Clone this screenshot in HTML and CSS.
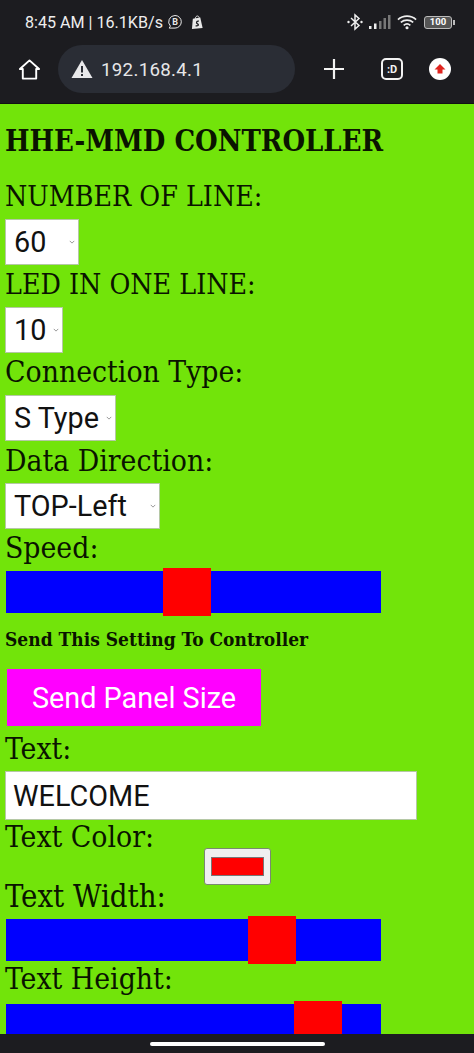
FILE: index.html
```html
<!DOCTYPE html>
<html lang="en">
<head>
<meta charset="utf-8">
<title>HHE-MMD CONTROLLER</title>
<link rel="stylesheet" href="styles.css">
</head>
<body>
<header class="chrome">
  <div class="status">
    <div class="status-left">
      <span>8:45 AM | 16.1KB/s</span>
      <svg class="ic-b" viewBox="0 0 16 16"><path d="M8 1.500a6.300 6.300 0 0 1 0 12.600H2.200l1.200-2A6.300 6.300 0 0 1 8 1.500z" fill="none" stroke="#e8e8e8" stroke-width="1"/><text x="8" y="11" text-anchor="middle" class="ic-b-t">B</text></svg>
      <svg class="ic-shop" viewBox="0 0 14 16"><path d="M2 4l8-1.500L12.500 14 1 15z" fill="#e8e8e8"/><path d="M4.500 4.500C4.500 2 6 1 7 1s2 1 2 3" fill="none" stroke="#e8e8e8"/><path d="M8.500 6.500C6 6 5 8.500 7 9.500s.5 2.500-2 2" fill="none" stroke="#1c1c20" stroke-width="1.400"/></svg>
    </div>
    <div class="status-right">
      <svg class="ic-bt" viewBox="0 0 18 18"><path d="M5 5l8 7.500L9 16V2l4 3.500L5 13" fill="none" stroke="#eee" stroke-width="1.500"/><circle cx="2.500" cy="9" r="1.200" fill="#eee"/><circle cx="15.500" cy="9" r="1.200" fill="#eee"/></svg>
      <svg class="ic-sig" viewBox="0 0 22 14"><rect x="0" y="11" width="2.500" height="3" fill="#eee"/><rect x="5" y="8.500" width="2.500" height="5.500" fill="#eee"/><rect x="10" y="6" width="2.500" height="8" fill="#777"/><rect x="14.500" y="3" width="2.500" height="11" fill="#777"/><rect x="19" y="0" width="2.500" height="14" fill="#777"/></svg>
      <svg class="ic-wifi" viewBox="0 0 22 16"><path d="M1 5.500a14 14 0 0 1 19 0M4 8.500a10 10 0 0 1 13 0M7 11.500a5.500 5.500 0 0 1 7 0" fill="none" stroke="#eee" stroke-width="1.700"/><circle cx="10.500" cy="14" r="1.600" fill="#eee"/></svg>
      <div class="battery"><span class="battery-body">100</span><span class="battery-tip"></span></div>
    </div>
  </div>
  <div class="toolbar">
    <svg class="ic-home" viewBox="0 0 24 24"><path d="M12 2.500L2 11.500h3V21.500h14V11.500h3z" fill="none" stroke="#fff" stroke-width="2" stroke-linejoin="round"/></svg>
    <div class="omnibox">
      <svg class="ic-warn" viewBox="0 0 22 20"><path d="M11 1L21.500 19H.5z" fill="#e8e8ea"/><rect x="10" y="7" width="2" height="6.500" fill="#2a2d35"/><rect x="10" y="15" width="2" height="2" fill="#2a2d35"/></svg>
      <span>192.168.4.1</span>
    </div>
    <svg class="ic-plus" viewBox="0 0 20 20"><path d="M10 0V20M0 10H20" stroke="#f2f2f2" stroke-width="2.200"/></svg>
    <div class="ext">:D</div>
    <div class="avatar"><svg viewBox="0 0 12 12"><path d="M6 1L11.500 6.500H8.500V10.500H3.500V6.500H.5z" fill="#e0241f"/></svg></div>
  </div>
</header>
<main class="page">
  <h1>HHE-MMD CONTROLLER</h1>
  <label class="lbl caps">NUMBER OF LINE:</label>
  <select class="sel w74"><option>60</option></select>
  <label class="lbl caps">LED IN ONE LINE:</label>
  <select class="sel w58"><option>10</option></select>
  <label class="lbl lbl-conn">Connection Type:</label>
  <select class="sel w111"><option>S Type</option></select>
  <label class="lbl lbl-dir">Data Direction:</label>
  <select class="sel w155"><option>TOP-Left</option></select>
  <label class="lbl lbl-speed">Speed:</label>
  <input class="rng" type="range" min="0" max="100" value="47.800">
  <h4>Send This Setting To Controller</h4>
  <button class="send">Send Panel Size</button>
  <label class="lbl lbl-text">Text:</label>
  <input class="txt" type="text" value="WELCOME">
  <div class="color-row">
    <label class="lbl">Text Color:</label>
    <input class="clr" type="color" value="#ff0000">
  </div>
  <label class="lbl lbl-width">Text Width:</label>
  <input class="rng" type="range" min="0" max="100" value="74.200">
  <label class="lbl lbl-height">Text Height:</label>
  <input class="rng" type="range" min="0" max="100" value="88.300">
</main>
<div class="navbar"><span class="pill"></span></div>
</body>
</html>
```
FILE: styles.css
```css
* { box-sizing: border-box; }
html, body { margin: 0; height: 1053px; overflow: hidden; }
body { position: relative; background: #72e40a; font-family: "DejaVu Serif Condensed", "DejaVu Serif", serif; color: #0a1400; }

.chrome { height: 104px; background: #1c1c20; border-bottom: 1px solid #111; font-family: Roboto, sans-serif; }
.status { height: 44px; padding: 0 19px 0 25px; display: flex; justify-content: space-between; align-items: center; color: #eee; font-size: 16.100px; }
.status-left, .status-right { display: flex; align-items: center; }
.ic-b { width: 16px; height: 16px; margin-left: 4px; }
.ic-b-t { font: 700 9px Roboto, sans-serif; fill: #e8e8e8; }
.ic-shop { width: 13px; height: 15px; margin-left: 8px; }
.ic-bt { width: 18px; height: 18px; }
.ic-sig { width: 22px; height: 14px; margin-left: 5px; }
.ic-wifi { width: 21px; height: 16px; margin-left: 6px; }
.battery { display: flex; align-items: center; margin-left: 6px; }
.battery-body { width: 28px; height: 13px; border: 1.500px solid #bbb; border-radius: 3px; background: #555; font-size: 9.500px; font-weight: 700; line-height: 10px; text-align: center; color: #fff; }
.battery-tip { width: 2px; height: 5px; background: #bbb; margin-left: 1px; }

.toolbar { height: 59px; display: flex; align-items: center; padding: 0 0 9px 18px; }
.ic-home { width: 23px; height: 23px; flex: none; }
.omnibox { width: 237px; height: 48px; margin-left: 17px; border-radius: 24px; background: #2a2d35; display: flex; align-items: center; padding-left: 13px; color: #e6e6e8; font-size: 18.700px; letter-spacing: .3px; }
.omnibox span { padding-top: 2px; }
.ic-warn { width: 22px; height: 20px; margin-right: 8px; }
.ic-plus { width: 20px; height: 20px; margin-left: 29px; flex: none; }
.ext { width: 22px; height: 22px; margin-left: 37px; border: 2px solid #f2f2f2; border-radius: 5px; color: #f2f2f2; font-size: 11px; font-weight: 700; display: flex; align-items: center; justify-content: center; flex: none; }
.avatar { width: 22px; height: 22px; margin-left: 26px; border-radius: 50%; background: #fff; display: flex; align-items: center; justify-content: center; flex: none; }
.avatar svg { width: 12px; height: 12px; }

.page { padding: 0 5px; }
h1 { margin: 0; padding-top: 21px; height: 73px; font-size: 28.900px; line-height: 32px; font-weight: 700; }
.lbl { display: block; font-size: 29.800px; line-height: 42px; height: 42px; white-space: nowrap; }
.caps { font-size: 28.300px; line-height: 40px; }
.lbl-conn { line-height: 38px; }
.lbl-dir { line-height: 40px; }
.sel { display: block; height: 46px; padding: 0 0 0 8px; border: 1px solid #b5c8a5; border-radius: 0; background: #fff; font: 28.800px Roboto, sans-serif; color: #111; appearance: none; -webkit-appearance: none; background-image: url("data:image/svg+xml,%3Csvg xmlns='http://www.w3.org/2000/svg' viewBox='0 0 8 5'%3E%3Cpath d='M1 1l3 3 3-3' fill='none' stroke='%23777' stroke-width='1'/%3E%3C/svg%3E"); background-repeat: no-repeat; background-size: 6px 4px; background-position: right 3px center; }
.w74 { width: 74px; } .w58 { width: 58px; } .w111 { width: 111px; } .w155 { width: 155px; }
.lbl-speed { height: 38px; line-height: 38px; }

.rng { display: block; width: 375px; height: 49px; margin: 0 0 0 1px; background: transparent; appearance: none; -webkit-appearance: none; }
.rng::-webkit-slider-runnable-track { height: 42px; background: #0000ff; }
.rng::-webkit-slider-thumb { -webkit-appearance: none; width: 48px; height: 48px; margin-top: -3px; background: #ff0000; border: 0; }

h4 { margin: 0; padding-top: 11px; height: 53px; font-size: 19px; line-height: 24px; font-weight: 700; white-space: nowrap; }
.send { display: block; width: 254px; height: 57px; margin: 0 0 0 2px; border: 0; background: #ff00ff; color: #fff; font: 28.800px Roboto, sans-serif; }
.lbl-text { height: 45px; line-height: 46px; }
.txt { display: block; width: 412px; height: 49px; padding: 0 7px; border: 1px solid #b5c8a5; background: #fff; font: 28.800px Roboto, sans-serif; color: #111; border-radius: 0; }
.color-row { display: flex; height: 65px; }
.color-row .lbl { width: 199px; line-height: 34px; }
.clr { width: 67px; height: 37px; margin-top: 28px; padding: 8px 6px; border: 1px solid #7a8a70; border-radius: 3px; background: #f0f0f0; appearance: none; -webkit-appearance: none; }
.clr::-webkit-color-swatch-wrapper { padding: 0; }
.clr::-webkit-color-swatch { border: 1px solid #777; border-radius: 0; }
.lbl-width { height: 30px; line-height: 22px; font-size: 30.800px; }
.lbl-height { height: 36px; line-height: 30px; }

.navbar { position: absolute; left: 0; right: 0; bottom: 0; height: 19px; background: #1c1c20; display: flex; justify-content: center; align-items: center; }
.pill { width: 175px; height: 4px; border-radius: 2px; background: #fff; }
```
